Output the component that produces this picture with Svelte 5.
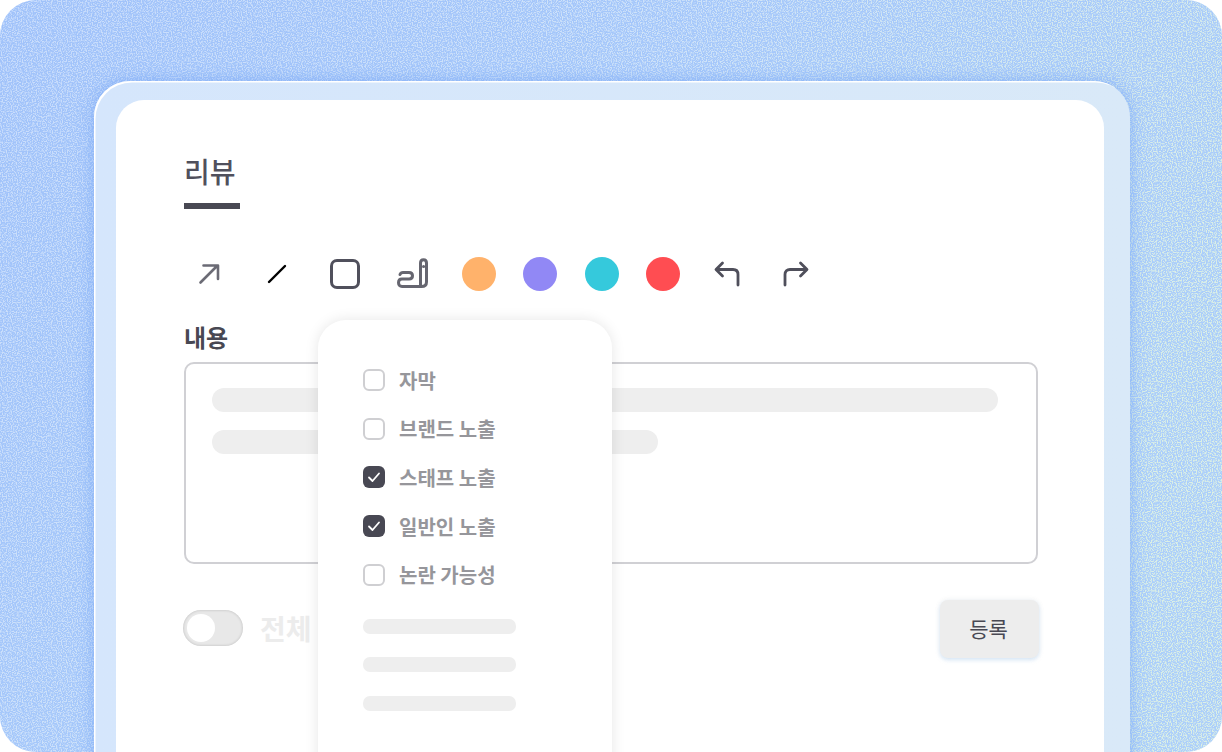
<script>
    const colors = ["#ffb26b", "#9188f5", "#35c9dc", "#ff4d52"];
    const options = [
        { label: "자막", checked: false },
        { label: "브랜드 노출", checked: false },
        { label: "스태프 노출", checked: true },
        { label: "일반인 노출", checked: true },
        { label: "논란 가능성", checked: false },
    ];
</script>

<div class="stage">
    <svg class="noise" width="1222" height="752" aria-hidden="true">
        <defs>
            <linearGradient id="wash" x1="0" y1="0" x2="1" y2="0.6">
                <stop offset="0" stop-color="#a0c2fa" />
                <stop offset="1" stop-color="#abcefb" />
            </linearGradient>
            <linearGradient id="speck" x1="0" y1="0" x2="1" y2="0.4">
                <stop offset="0" stop-color="#c8dcfc" />
                <stop offset="0.5" stop-color="#cfe3f9" />
                <stop offset="1" stop-color="#dcf0e4" />
            </linearGradient>
            <filter id="grain" x="0" y="0" width="100%" height="100%" color-interpolation-filters="sRGB">
                <feTurbulence type="fractalNoise" baseFrequency="0.8" numOctaves="1" seed="4" result="n" />
                <feColorMatrix
                    in="n"
                    type="matrix"
                    values="0 0 0 0 0
                            0 0 0 0 0
                            0 0 0 0 0
                            5 0 0 0 -2.2"
                    result="a"
                />
                <feComposite in="SourceGraphic" in2="a" operator="in" />
            </filter>
        </defs>
        <rect width="1222" height="752" fill="url(#wash)" />
        <rect width="1222" height="752" fill="url(#speck)" filter="url(#grain)" />
    </svg>

    <div class="frame">
        <div class="panel">
            <div class="tabs">
                <span class="tab">리뷰</span>
            </div>

            <div class="toolbar">
                <div class="tools">
                    <button class="tool" aria-label="화살표">
                        <svg width="24" height="24" viewBox="0 0 24 24" fill="none" stroke="#6b6b75" stroke-width="2.6" stroke-linecap="round" stroke-linejoin="round">
                            <path d="M3.500 20.500 20 4M6.500 3.500h14.500V17" />
                        </svg>
                    </button>
                    <button class="tool" aria-label="선">
                        <svg width="24" height="24" viewBox="0 0 24 24" fill="none" stroke="#000" stroke-width="2.4" stroke-linecap="round">
                            <path d="M4 20 20 4" />
                        </svg>
                    </button>
                    <button class="tool" aria-label="사각형">
                        <svg width="32" height="32" viewBox="0 0 32 32" fill="none" stroke="#50505c" stroke-width="3">
                            <rect x="2.500" y="2.500" width="27" height="27" rx="5.500" />
                        </svg>
                    </button>
                    <button class="tool" aria-label="펜">
                        <svg width="32" height="32" viewBox="0 0 32 32" fill="none" stroke="#666670" stroke-width="3" stroke-linecap="round" stroke-linejoin="round">
                            <path d="M3 16.500c.5-1.300 1.500-2 3-2h6c2.200 0 3.500 1.300 3.500 3.200S14.200 21 12 21H5c-2.200 0-3.500 1.600-3.500 3.800S3 28.500 5 28.500h19.500c3 0 5-1.700 5-4.500V5c0-4.500-6-4.500-6 0v23" />
                            <path d="M26.500 8.500h.1" />
                        </svg>
                    </button>
                </div>
                <div class="swatches">
                    {#each colors as color}
                        <button class="swatch" style="background: {color}" aria-label={color}></button>
                    {/each}
                </div>
                <div class="tools history">
                    <button class="tool" aria-label="실행 취소">
                        <svg width="28" height="28" viewBox="0 0 28 28" fill="none" stroke="#4f4f5b" stroke-width="2.800" stroke-linecap="round" stroke-linejoin="round">
                            <path d="M9.500 3 3 9.500 9.500 16M3.500 9.500H20c3 0 5 1.800 5 5V25" />
                        </svg>
                    </button>
                    <button class="tool" aria-label="다시 실행">
                        <svg width="28" height="28" viewBox="0 0 28 28" fill="none" stroke="#4f4f5b" stroke-width="2.800" stroke-linecap="round" stroke-linejoin="round">
                            <path d="M18.500 3 25 9.500 18.500 16M24.500 9.500H8c-3 0-5 1.800-5 5V25" />
                        </svg>
                    </button>
                </div>
            </div>

            <div class="field-label">내용</div>
            <div class="field">
                <div class="line full"></div>
                <div class="line half"></div>
            </div>

            <div class="footer">
                <div class="toggle-wrap">
                    <span class="toggle"><span class="knob"></span></span>
                    <span class="toggle-label">전체</span>
                </div>
                <button class="submit">등록</button>
            </div>

            <div class="menu">
                {#each options as option}
                    <div class="option">
                        <span class="box" class:checked={option.checked}>
                            {#if option.checked}
                                <svg width="14" height="14" viewBox="0 0 14 14" fill="none" stroke="#fff" stroke-width="1.800" stroke-linecap="round" stroke-linejoin="round">
                                    <path d="M2 7.500 5.500 11 12 3.500" />
                                </svg>
                            {/if}
                        </span>
                        <span>{option.label}</span>
                    </div>
                {/each}
                <div class="bars">
                    <div class="bar"></div>
                    <div class="bar"></div>
                    <div class="bar"></div>
                </div>
            </div>
        </div>
    </div>
</div>

<style>
    :global(body) {
        margin: 0;
        background: #fff;
    }

    .stage {
        position: relative;
        width: 1222px;
        height: 752px;
        border-radius: 36px;
        overflow: hidden;
        box-sizing: border-box;
        padding: 81px 92px 0 94px;
        font-family: "Noto Sans CJK KR", "Noto Sans", sans-serif;
    }
    .noise {
        position: absolute;
        inset: 0;
    }

    .frame {
        position: relative;
        height: 720px;
        box-sizing: border-box;
        padding: 19px 26px 0 22px;
        border-radius: 36px 36px 0 0;
        background: linear-gradient(90deg, #d5e6fc, #d9e9f8);
        box-shadow: inset 2px 2px 0 -0.5px #ffffff, 0 0 16px rgba(110, 160, 245, 0.65);
    }

    .panel {
        position: relative;
        height: 700px;
        box-sizing: border-box;
        padding: 50px 66px 0 68px;
        background: #fff;
        border-radius: 28px 28px 0 0;
    }

    .tabs {
        display: flex;
    }
    .tab {
        width: 56px;
        height: 59px;
        box-sizing: border-box;
        border-bottom: 6px solid #484853;
        color: #50505c;
        font-size: 28px;
        font-weight: 500;
        line-height: 42px;
    }

    .toolbar {
        display: flex;
        align-items: center;
        margin-top: 42px;
        height: 46px;
    }
    .tools {
        display: flex;
        gap: 18px;
    }
    .history {
        gap: 19px;
    }
    .tool {
        display: flex;
        align-items: center;
        justify-content: center;
        width: 50px;
        height: 46px;
        padding: 0;
        border: 0;
        background: none;
    }
    .swatches {
        display: flex;
        gap: 27.300px;
        margin: 0 22px 0 24px;
    }
    .swatch {
        width: 34px;
        height: 34px;
        padding: 0;
        border: 0;
        border-radius: 50%;
    }

    .field-label {
        margin-top: 22px;
        color: #484853;
        font-size: 24px;
        font-weight: 700;
        line-height: 36px;
    }
    .field {
        box-sizing: border-box;
        height: 202px;
        margin-top: 7px;
        padding: 24px 38px 0 26px;
        border: 2px solid #d0d0d4;
        border-radius: 10px;
    }
    .line {
        height: 24px;
        border-radius: 12px;
        background: #eeeeee;
    }
    .half {
        width: 446px;
        margin-top: 18px;
    }

    .footer {
        display: flex;
        align-items: center;
        justify-content: space-between;
        margin-top: 36px;
    }
    .toggle-wrap {
        display: flex;
        align-items: center;
        gap: 17px;
        margin: 0 0 2px -1px;
    }
    .toggle {
        display: block;
        box-sizing: border-box;
        width: 60px;
        height: 36px;
        padding: 4px;
        border-radius: 18px;
        background: #e8e8e8;
        box-shadow: inset 0 0 3px rgba(0, 0, 0, 0.2);
    }
    .knob {
        display: block;
        width: 28px;
        height: 28px;
        border-radius: 50%;
        background: #fff;
    }
    .toggle-label {
        color: #ececec;
        font-size: 28px;
        font-weight: 700;
    }
    .submit {
        width: 99px;
        height: 58px;
        margin-right: -1px;
        padding: 0 2px 3px 0;
        border: 0;
        border-radius: 8px;
        background: #ededed;
        color: #484853;
        font-family: inherit;
        font-size: 21px;
        box-shadow: 0 2px 4px rgba(150, 195, 240, 0.35), 0 0 6px rgba(0, 0, 0, 0.06);
    }

    .menu {
        position: absolute;
        left: 202px;
        top: 220px;
        width: 294px;
        height: 520px;
        box-sizing: border-box;
        padding: 36px 45px 0;
        border-radius: 28px;
        background: #fff;
        box-shadow: 0 0 14px rgba(0, 0, 0, 0.1);
    }
    .option {
        display: flex;
        align-items: center;
        gap: 14px;
        height: 48.600px;
        color: #96969b;
        font-size: 20px;
        font-weight: 700;
    }
    .box {
        display: flex;
        align-items: center;
        justify-content: center;
        box-sizing: border-box;
        width: 22px;
        height: 22px;
        border: 2px solid #cfcfd2;
        border-radius: 6px;
    }
    .box.checked {
        border: 0;
        background: #484853;
    }
    .bars {
        display: flex;
        flex-direction: column;
        gap: 23.500px;
        margin-top: 20px;
    }
    .bar {
        width: 153px;
        height: 15px;
        border-radius: 7px;
        background: #eeeeee;
    }
</style>
